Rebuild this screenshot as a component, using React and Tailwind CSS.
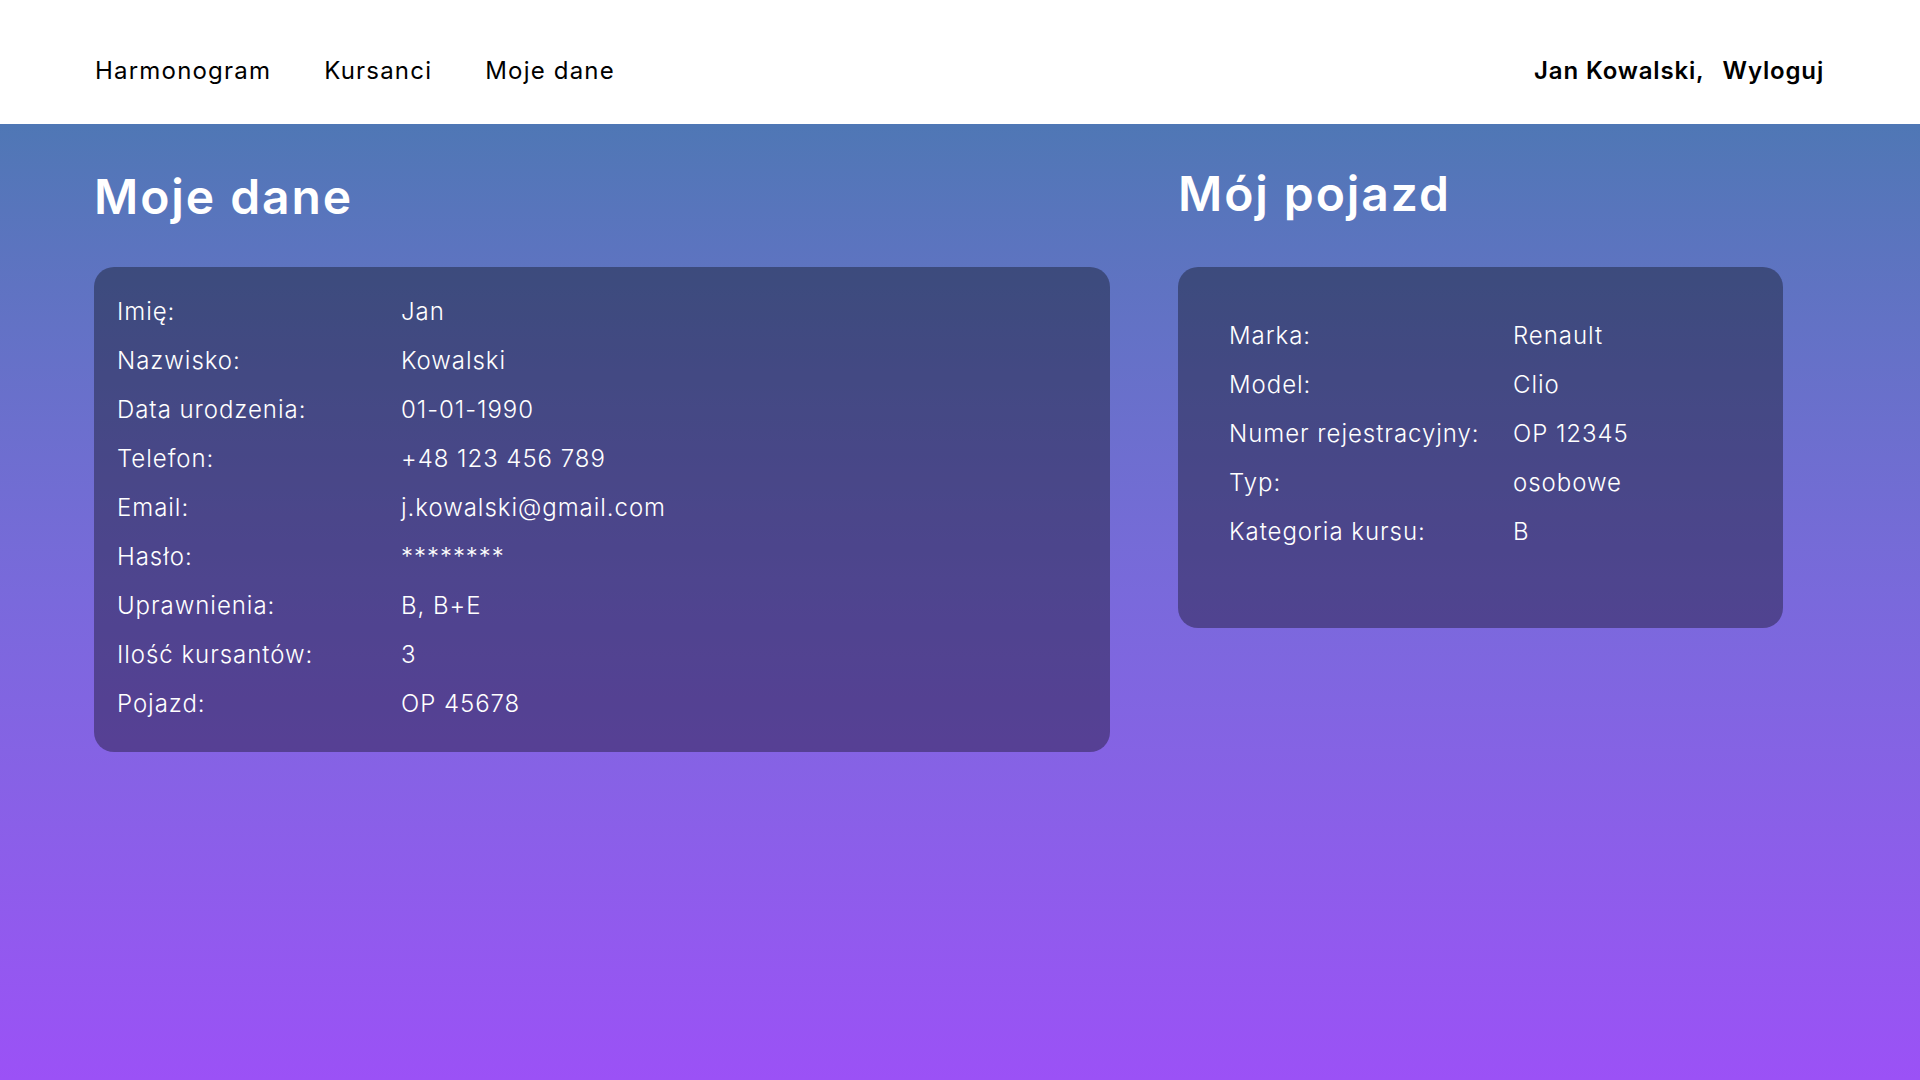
import React from "react";

const MY_DATA = [
  ["Imię:", "Jan"],
  ["Nazwisko:", "Kowalski"],
  ["Data urodzenia:", "01-01-1990"],
  ["Telefon:", "+48 123 456 789"],
  ["Email:", "j.kowalski@gmail.com"],
  ["Hasło:", "********"],
  ["Uprawnienia:", "B, B+E"],
  ["Ilość kursantów:", "3"],
  ["Pojazd:", "OP 45678"],
];

const VEHICLE = [
  ["Marka:", "Renault"],
  ["Model:", "Clio"],
  ["Numer rejestracyjny:", "OP 12345"],
  ["Typ:", "osobowe"],
  ["Kategoria kursu:", "B"],
];

const InfoRows = ({ rows }) => (
  <div className="flex flex-col">
    {rows.map(([label, value]) => (
      <div key={label} className="flex h-[49px] items-center text-[24px] font-light tracking-[0.04em] text-white">
        <span className="w-[284px] shrink-0">{label}</span>
        <span>{value}</span>
      </div>
    ))}
  </div>
);

const App = () => {
  return (
    <div className="min-h-screen flex flex-col font-['Inter','Noto_Sans',sans-serif]">
      {/* Header */}
      <header className="h-[124px] bg-white flex items-center justify-between pl-[95px] pr-[96px] pt-[18px]">
        <nav className="flex items-center gap-[53px] text-[24px] tracking-[0.05em] text-black">
          <a>Harmonogram</a>
          <a>Kursanci</a>
          <a>Moje dane</a>
        </nav>
        <div className="flex items-center gap-[18px] text-[24px] font-semibold tracking-[0.035em] text-black">
          <span>Jan Kowalski,</span>
          <a>Wyloguj</a>
        </div>
      </header>

      {/* Content */}
      <main className="flex-1 bg-gradient-to-b from-[#4f77b5] via-[#7a69dc] to-[#9b51f6] pl-[94px] pt-[49px] flex gap-[68px] items-start">
        <section className="w-[1016px]">
          <h1 className="h-[48px] text-[48px] leading-none font-semibold tracking-[0.04em] text-white mb-[46px]">
            Moje dane
          </h1>
          <div className="rounded-[20px] bg-black/35 pl-[23px] pt-[20px] pb-[24px]">
            <InfoRows rows={MY_DATA} />
          </div>
        </section>

        <section className="w-[605px]">
          <h1 className="h-[48px] text-[48px] leading-none font-semibold tracking-[0.04em] text-white mb-[46px] -mt-[3px] pb-[3px] box-content">
            Mój pojazd
          </h1>
          <div className="rounded-[20px] bg-black/35 pl-[51px] pt-[44px] pb-[72px]">
            <InfoRows rows={VEHICLE} />
          </div>
        </section>
      </main>
    </div>
  );
};

export default App;
